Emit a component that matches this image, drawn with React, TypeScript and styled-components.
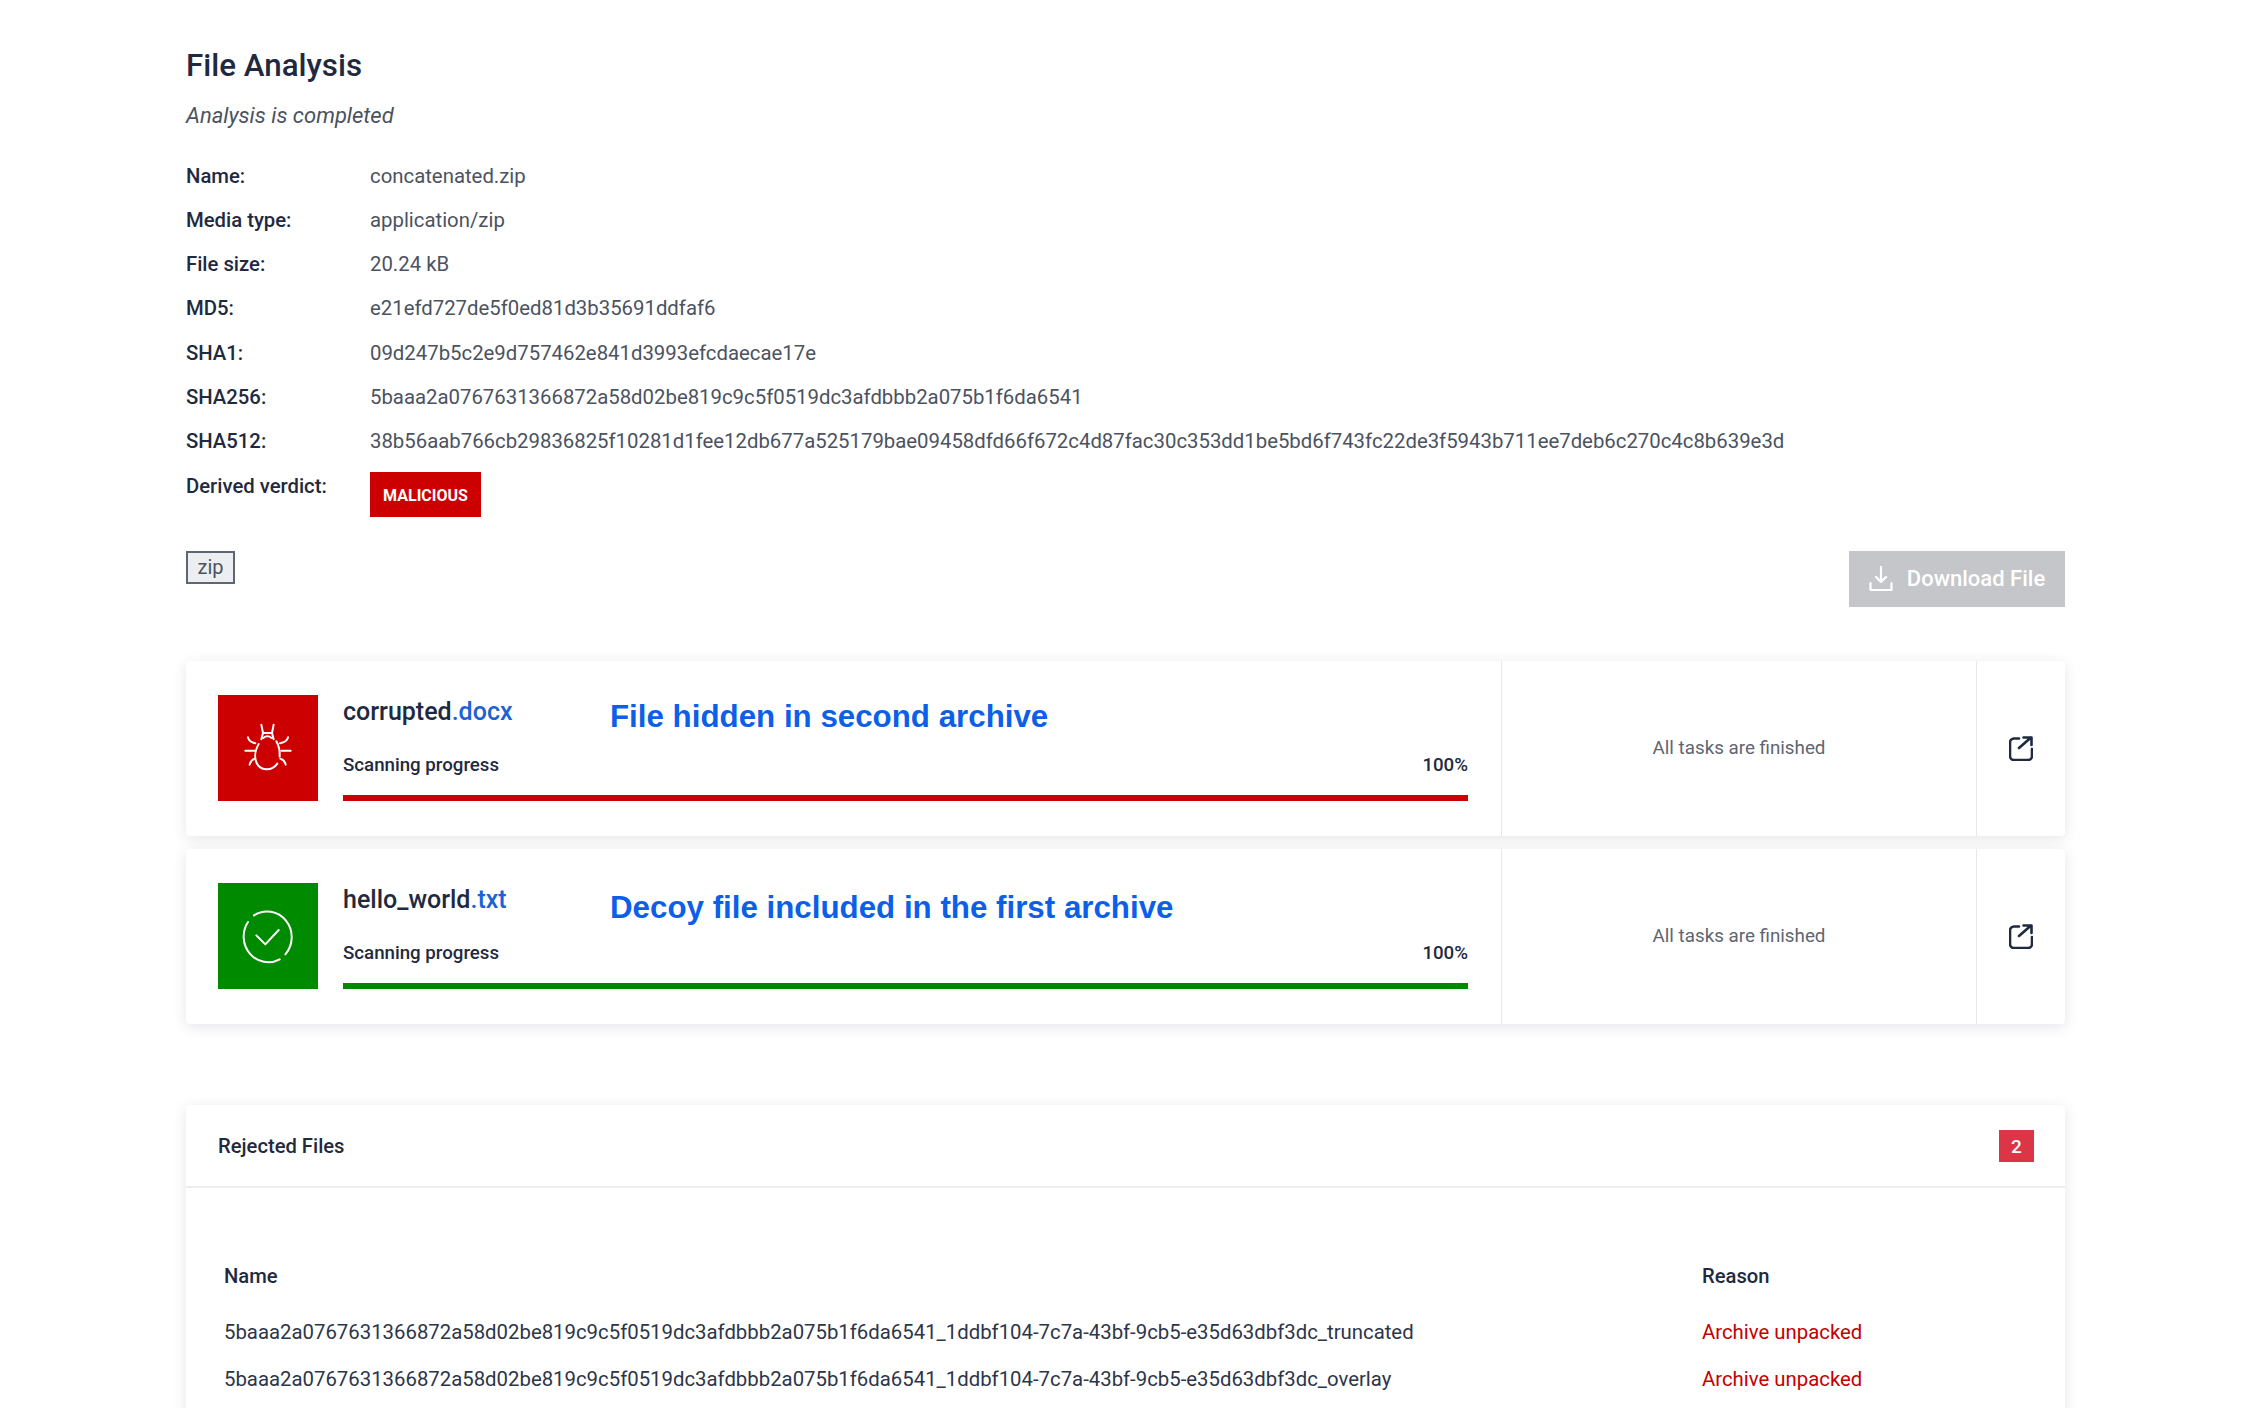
import React from 'react'
import styled, { createGlobalStyle } from 'styled-components'

const GlobalStyle = createGlobalStyle`
  html, body {
    margin: 0;
    padding: 0;
    height: 1408px;
    overflow: hidden;
    background: #fff;
    font-family: Roboto, "Liberation Sans", sans-serif;
    color: #1f2a40;
  }
`

const Page = styled.div`
  box-sizing: border-box;
  height: 1408px;
  overflow: hidden;
  padding: 0 185px 0 186px;
`

const Title = styled.h1`
  margin: 0;
  padding-top: 45px;
  font-size: 31.3px;
  line-height: 42px;
  font-weight: 500;
  color: #1f2a40;
`

const Subtitle = styled.div`
  margin-top: 15px;
  font-size: 22px;
  line-height: 28px;
  font-style: italic;
  color: #4b5260;
`

const InfoList = styled.dl`
  margin: 23.5px 0 0;
  display: grid;
  grid-template-columns: 184px 1fr;
  grid-auto-rows: 44.3px;
`

const InfoLabel = styled.dt`
  font-size: 20.3px;
  line-height: 44px;
  font-weight: 500;
  color: #1f2a40;
`

const InfoValue = styled.dd`
  margin: 0;
  font-size: 20.35px;
  line-height: 44px;
  color: #4b5260;
  white-space: nowrap;
`

const Verdict = styled.span`
  box-sizing: border-box;
  display: flex;
  align-items: center;
  justify-content: center;
  width: 111px;
  height: 45px;
  margin-top: 8.5px;
  padding-top: 3px;
  background: #cc0000;
  color: #fff;
  font-size: 16px;
  font-weight: 700;
`

const TagRow = styled.div`
  margin-top: 43px;
  display: flex;
  justify-content: space-between;
  align-items: flex-start;
`

const Tag = styled.span`
  box-sizing: border-box;
  width: 49px;
  height: 33px;
  display: flex;
  align-items: center;
  justify-content: center;
  background: #eceef2;
  border: 2px solid #5f6673;
  font-size: 20px;
  color: #4b5260;
`

const DownloadButton = styled.button`
  width: 216px;
  height: 56px;
  border: 0;
  padding: 0;
  display: flex;
  align-items: center;
  justify-content: center;
  gap: 14px;
  background: #c4c6c9;
  color: #fff;
  font-family: inherit;
  font-size: 22px;
  font-weight: 500;
`

const CardList = styled.div`
  margin-top: 54px;
  display: flex;
  flex-direction: column;
  gap: 13px;
`

const Card = styled.div`
  height: 175px;
  display: flex;
  background: #fff;
  border-radius: 4px;
  box-shadow: 0 3px 14px rgba(40, 50, 70, 0.12);
`

const CardMain = styled.div`
  box-sizing: border-box;
  width: 1315px;
  padding: 34px 33px 0 32px;
  display: flex;
  gap: 25px;
`

const StatusIcon = styled.div<{ $color: string }>`
  flex: none;
  width: 100px;
  height: 106px;
  display: flex;
  align-items: center;
  justify-content: center;
  background: ${(p) => p.$color};
`

const CardBody = styled.div`
  flex: 1;
  min-width: 0;
`

const NameRow = styled.div`
  height: 32px;
  display: flex;
`

const FileName = styled.div`
  flex: none;
  width: 267px;
  margin-top: 1px;
  font-size: 25px;
  line-height: 32px;
  font-weight: 500;
  color: #1f2a40;
`

const Extension = styled.span`
  color: #1a62d6;
`

const Annotation = styled.div<{ $offset: number }>`
  margin-top: ${(p) => p.$offset}px;
  font-family: "Liberation Sans", Arial, sans-serif;
  font-size: 31.3px;
  line-height: 42px;
  font-weight: 700;
  color: #0b5fe8;
  white-space: nowrap;
`

const ProgressRow = styled.div`
  margin-top: 26px;
  display: flex;
  justify-content: space-between;
  font-size: 18.7px;
  line-height: 24px;
  font-weight: 500;
  color: #1f2a40;
`

const ProgressBar = styled.div<{ $color: string }>`
  margin-top: 18px;
  height: 6px;
  background: ${(p) => p.$color};
`

const StatusCell = styled.div`
  width: 476px;
  box-sizing: border-box;
  border-left: 1px solid #e6e8eb;
  border-right: 1px solid #e6e8eb;
  display: flex;
  align-items: center;
  justify-content: center;
  font-size: 18.8px;
  color: #5f6570;
`

const ActionCell = styled.div`
  flex: 1;
  display: flex;
  align-items: center;
  justify-content: center;
`

const Panel = styled.section`
  margin-top: 81px;
  background: #fff;
  border-radius: 4px;
  box-shadow: 0 3px 14px rgba(40, 50, 70, 0.12);
`

const PanelHeader = styled.header`
  box-sizing: border-box;
  height: 83px;
  padding: 2px 31px 0 32px;
  display: flex;
  align-items: center;
  justify-content: space-between;
  border-bottom: 2px solid #eceef0;
  font-size: 20.2px;
  font-weight: 500;
`

const CountBadge = styled.span`
  width: 35px;
  height: 32px;
  display: flex;
  align-items: center;
  justify-content: center;
  background: #dc3545;
  color: #fff;
  font-size: 19px;
`

const PanelBody = styled.div`
  padding: 65px 32px 80px 38px;
`

const Table = styled.div`
  display: grid;
  grid-template-columns: 1478px 1fr;
  grid-template-rows: 56px 47px 47px;
  font-size: 20.35px;
  line-height: 47px;
`

const HeadCell = styled.div`
  font-size: 20.2px;
  font-weight: 500;
  color: #1f2a40;
  line-height: 46px;
`

const NameCell = styled.div`
  color: #2d3548;
  white-space: nowrap;
`

const ReasonCell = styled.div`
  color: #c40000;
`

const BugIcon = () => (
  <svg width="60" height="60" viewBox="0 0 180 180" fill="none" stroke="#fff" strokeWidth="6" strokeLinecap="round" strokeLinejoin="round">
    <path d="M70 20L75 45L70 64M107 20L102 45L107 64M75 45H102M76 60Q88 50 101 60" />
    <path d="M62 78C52 95 48 118 56 135C66 158 100 162 118 137" />
    <path d="M115 70C122 82 126 100 125 116" />
    <path d="M22 98H50M130 98H158" />
    <path d="M30 58C32 68 40 73 52 76M150 58C148 68 140 73 126 76" />
    <path d="M35 140C37 130 42 125 50 122M143 140C141 130 136 125 127 122" />
  </svg>
)

const CheckIcon = () => (
  <svg width="60" height="60" viewBox="0 0 180 180" fill="none" stroke="#fff" strokeWidth="6" strokeLinecap="round" strokeLinejoin="round">
    <path d="M48 28A74 77 0 0 1 142 145" />
    <path d="M125 160A74 77 0 0 1 30 48" />
    <path d="M55 88L82 115L122 72" />
  </svg>
)

const DownloadIcon = () => (
  <svg width="24" height="26" viewBox="0 0 24 26" fill="none" stroke="#fff" strokeWidth="2.2" strokeLinecap="round" strokeLinejoin="round">
    <path d="M12 1v15M7 11l5 5 5-5" />
    <path d="M1.500 17v7h21v-7" />
  </svg>
)

const ExternalIcon = () => (
  <svg width="24" height="25" viewBox="0 0 24 25" fill="none" stroke="#1f2a40" strokeWidth="2.6" strokeLinecap="round" strokeLinejoin="round">
    <path d="M10 2.500H5a4 4 0 0 0-4 4v13.500a4 4 0 0 0 4 4h14a4 4 0 0 0 4-4v-7" />
    <path d="M10 12L22 1.500M14.500 1.500H22.500V9" />
  </svg>
)

const hash256 = '5baaa2a0767631366872a58d02be819c9c5f0519dc3afdbbb2a075b1f6da6541'

const info = [
  ['Name:', 'concatenated.zip'],
  ['Media type:', 'application/zip'],
  ['File size:', '20.24 kB'],
  ['MD5:', 'e21efd727de5f0ed81d3b35691ddfaf6'],
  ['SHA1:', '09d247b5c2e9d757462e841d3993efcdaecae17e'],
  ['SHA256:', hash256],
  [
    'SHA512:',
    '38b56aab766cb29836825f10281d1fee12db677a525179bae09458dfd66f672c4d87fac30c353dd1be5bd6f743fc22de3f5943b711ee7deb6c270c4c8b639e3d',
  ],
]

const files = [
  {
    name: 'corrupted',
    ext: '.docx',
    note: 'File hidden in second archive',
    noteOffset: 1,
    color: '#cc0000',
    icon: <BugIcon />,
  },
  {
    name: 'hello_world',
    ext: '.txt',
    note: 'Decoy file included in the first archive',
    noteOffset: 4,
    color: '#008a00',
    icon: <CheckIcon />,
  },
]

const rejected = [
  `${hash256}_1ddbf104-7c7a-43bf-9cb5-e35d63dbf3dc_truncated`,
  `${hash256}_1ddbf104-7c7a-43bf-9cb5-e35d63dbf3dc_overlay`,
]

export default function App() {
  return (
    <Page>
      <GlobalStyle />
      <Title>File Analysis</Title>
      <Subtitle>Analysis is completed</Subtitle>
      <InfoList>
        {info.map(([label, value]) => (
          <React.Fragment key={label}>
            <InfoLabel>{label}</InfoLabel>
            <InfoValue>{value}</InfoValue>
          </React.Fragment>
        ))}
        <InfoLabel>Derived verdict:</InfoLabel>
        <InfoValue>
          <Verdict>MALICIOUS</Verdict>
        </InfoValue>
      </InfoList>
      <TagRow>
        <Tag>zip</Tag>
        <DownloadButton>
          <DownloadIcon />
          Download File
        </DownloadButton>
      </TagRow>
      <CardList>
        {files.map((file) => (
          <Card key={file.name}>
            <CardMain>
              <StatusIcon $color={file.color}>{file.icon}</StatusIcon>
              <CardBody>
                <NameRow>
                  <FileName>
                    {file.name}
                    <Extension>{file.ext}</Extension>
                  </FileName>
                  <Annotation $offset={file.noteOffset}>{file.note}</Annotation>
                </NameRow>
                <ProgressRow>
                  <span>Scanning progress</span>
                  <span>100%</span>
                </ProgressRow>
                <ProgressBar $color={file.color} />
              </CardBody>
            </CardMain>
            <StatusCell>All tasks are finished</StatusCell>
            <ActionCell>
              <ExternalIcon />
            </ActionCell>
          </Card>
        ))}
      </CardList>
      <Panel>
        <PanelHeader>
          <span>Rejected Files</span>
          <CountBadge>2</CountBadge>
        </PanelHeader>
        <PanelBody>
          <Table>
            <HeadCell>Name</HeadCell>
            <HeadCell>Reason</HeadCell>
            {rejected.map((name) => (
              <React.Fragment key={name}>
                <NameCell>{name}</NameCell>
                <ReasonCell>Archive unpacked</ReasonCell>
              </React.Fragment>
            ))}
          </Table>
        </PanelBody>
      </Panel>
    </Page>
  )
}
